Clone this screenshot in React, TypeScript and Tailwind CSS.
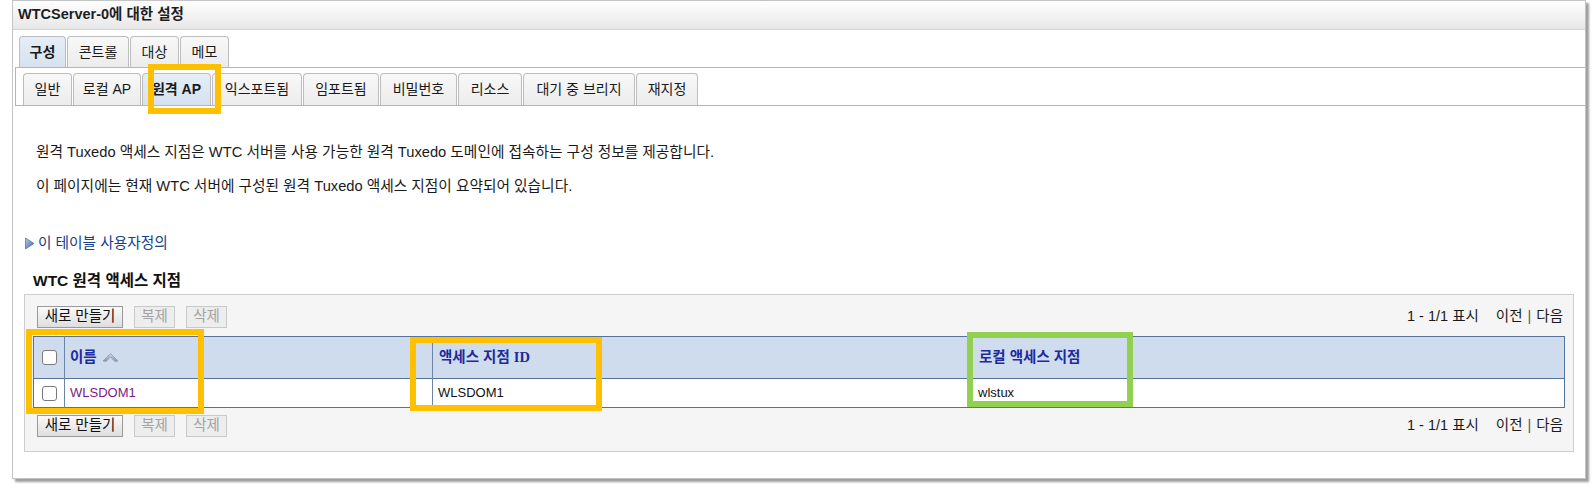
import React from 'react';

const FONT = "font-['Liberation_Sans','Noto_Sans_CJK_KR',sans-serif]";

const topTabs = [
  { label: '구성', w: 'w-[47px]', active: true },
  { label: '콘트롤', w: 'w-[62px]', active: false },
  { label: '대상', w: 'w-[49px]', active: false },
  { label: '메모', w: 'w-[49px]', active: false },
];

const subTabs = [
  { label: '일반', w: 'w-[49px]', active: false },
  { label: '로컬 AP', w: 'w-[68px]', active: false },
  { label: '원격 AP', w: 'w-[69px]', active: true },
  { label: '익스포트됨', w: 'w-[90px]', active: false },
  { label: '임포트됨', w: 'w-[76px]', active: false },
  { label: '비밀번호', w: 'w-[77px]', active: false },
  { label: '리소스', w: 'w-[64px]', active: false },
  { label: '대기 중 브리지', w: 'w-[112px]', active: false },
  { label: '재지정', w: 'w-[62px]', active: false },
];

const Tab = ({ label, w, active, h }: { label: string; w: string; active: boolean; h: string }) => (
  <div
    className={`${w} ${h} flex items-center justify-center rounded-t-[4px] border border-b-0 border-[#bdbdbd] text-[14px] text-[#1a1a1a] ${
      active ? 'bg-gradient-to-b from-[#e6eef7] to-[#d6e2ef] font-bold' : 'bg-gradient-to-b from-[#f8f8f8] to-[#ececec]'
    }`}
  >
    {label}
  </div>
);

const Btn = ({ label, w, disabled }: { label: string; w: string; disabled?: boolean }) => (
  <div
    className={`${w} h-[22px] flex items-center justify-center text-[14.5px] border ${
      disabled
        ? 'border-[#c9c9c9] bg-[#ededed] text-[#a3a3a3]'
        : 'border-[#9a9a9a] bg-gradient-to-b from-[#fafafa] to-[#dedede] text-[#111]'
    }`}
  >
    {label}
  </div>
);

const Toolbar = () => (
  <div className="flex items-center justify-between h-[22px] pl-[12px] pr-[10px]">
    <div className="flex gap-[11px]">
      <Btn label="새로 만들기" w="w-[86px]" />
      <Btn label="복제" w="w-[41px]" disabled />
      <Btn label="삭제" w="w-[41px]" disabled />
    </div>
    <div className="text-[14.5px] text-[#1a1a1a] flex items-center">
      <span>1 - 1/1 표시</span>
      <span className="ml-[17px]">이전</span>
      <span className="mx-[5px] text-[#555]">|</span>
      <span>다음</span>
    </div>
  </div>
);

const Checkbox = () => (
  <div className="w-[15px] h-[15px] rounded-[3px] border border-[#7a7a7a] bg-white mx-auto" />
);

const SortIcon = () => (
  <svg width="17" height="11" viewBox="0 0 17 11" className="ml-[5px]">
    <defs>
      <linearGradient id="sg" x1="0" y1="0" x2="0" y2="1">
        <stop offset="0" stopColor="#d3dcea" />
        <stop offset="1" stopColor="#7f93b2" />
      </linearGradient>
    </defs>
    <path d="M1 9 L8.5 1.5 L16 9 L13 9.5 L8.5 5 L4 9.5 Z" fill="url(#sg)" stroke="#8a9ab2" strokeWidth="0.8" strokeLinejoin="round" />
  </svg>
);

const Box = ({ cls }: { cls: string }) => <div className={`absolute pointer-events-none ${cls}`} />;

export default function App() {
  return (
    <div className={`relative w-[1594px] h-[503px] bg-white pl-[12px] ${FONT}`}>
      <div className="w-[1574px] h-[479px] border border-[#c4c4c4] bg-white shadow-[3px_3px_2px_rgba(0,0,0,0.38)] flex flex-col">
        {/* title bar */}
        <div className="h-[29px] border-b border-[#d4d4d4] bg-gradient-to-b from-white to-[#e7e7e7] pl-[5px] flex items-center text-[14.5px] font-bold text-[#1e1e1e]">
          WTCServer-0에 대한 설정
        </div>

        {/* top tabs */}
        <div className="mt-[6px] pl-[6px] flex gap-[1px]">
          {topTabs.map((t) => (
            <Tab key={t.label} {...t} h="h-[31px]" />
          ))}
        </div>

        {/* sub tabs */}
        <div className="ml-[2px] h-[39px] border-t border-l border-b border-[#a7b8cc] pl-[7px] pt-[5px] flex gap-[1px]">
          {subTabs.map((t) => (
            <Tab key={t.label} {...t} h="h-[32px]" />
          ))}
        </div>

        {/* description */}
        <div className="pl-[23px] text-[14.7px] leading-[16px] text-[#1a1a1a]">
          <p className="mt-[38px]">원격 Tuxedo 액세스 지점은 WTC 서버를 사용 가능한 원격 Tuxedo 도메인에 접속하는 구성 정보를 제공합니다.</p>
          <p className="mt-[18px]">이 페이지에는 현재 WTC 서버에 구성된 원격 Tuxedo 액세스 지점이 요약되어 있습니다.</p>
        </div>

        {/* customize */}
        <div className="mt-[41px] pl-[11px] flex items-center h-[16px] text-[14.7px] text-[#12408a]">
          <svg width="11" height="13" viewBox="0 0 11 13" className="mr-[3px]">
            <defs>
              <linearGradient id="tg" x1="0" y1="0" x2="1" y2="1">
                <stop offset="0" stopColor="#b9cbe6" />
                <stop offset="1" stopColor="#3b63a6" />
              </linearGradient>
            </defs>
            <path d="M1.5 1 L10 6.5 L1.5 12 Z" fill="url(#tg)" stroke="#5a78ad" strokeWidth="0.8" strokeLinejoin="round" />
          </svg>
          이 테이블 사용자정의
        </div>

        {/* table title */}
        <div className="mt-[22px] pl-[20px] h-[16px] leading-[16px] text-[15.5px] font-bold text-[#111]">WTC 원격 액세스 지점</div>

        {/* table panel */}
        <div className="mt-[5px] ml-[11px] w-[1550px] h-[158px] border border-[#cdcdcd] bg-[#f5f5f5] pt-[11px]">
          <Toolbar />
          <div className="mt-[8px] ml-[8px] w-[1532px] bg-white">
            <table className="w-full border-collapse border border-[#54729a] text-[14.5px] table-fixed">
              <colgroup>
                <col className="w-[31px]" />
                <col className="w-[368px]" />
                <col className="w-[540px]" />
                <col />
              </colgroup>
              <thead>
                <tr className="h-[42px] bg-[#cfdcee]">
                  <th className="border-r border-[#6c84a6]">
                    <Checkbox />
                  </th>
                  <th className="border-r border-[#6c84a6] text-left pl-[5px] font-bold text-[#1d2a9e]">
                    <div className="flex items-center">
                      이름
                      <SortIcon />
                    </div>
                  </th>
                  <th className="border-r border-[#6c84a6] text-left pl-[6px] font-bold text-[#1d2a9e]">
                    액세스 지점 <span className="font-['Liberation_Serif',serif]">ID</span>
                  </th>
                  <th className="text-left pl-[6px] font-bold text-[#1d2a9e]">로컬 액세스 지점</th>
                </tr>
              </thead>
              <tbody>
                <tr className="h-[29px] border-t border-[#54729a] text-[13px]">
                  <td className="border-r border-[#6c84a6]">
                    <Checkbox />
                  </td>
                  <td className="border-r border-[#6c84a6] pl-[5px] text-[#7e1a86]">WLSDOM1</td>
                  <td className="border-r border-[#6c84a6] pl-[5px] text-[#111]">WLSDOM1</td>
                  <td className="pl-[5px] text-[#111]">wlstux</td>
                </tr>
              </tbody>
            </table>
          </div>
          <div className="mt-[7px]">
            <Toolbar />
          </div>
        </div>
      </div>

      {/* annotation boxes */}
      <Box cls="left-[148px] top-[64px] w-[73px] h-[50px] border-[6px] border-[#ffc000]" />
      <Box cls="left-[26px] top-[329px] w-[178px] h-[85px] border-[6px] border-[#ffc000]" />
      <Box cls="left-[410px] top-[337px] w-[192px] h-[74px] border-[6px] border-[#ffc000]" />
      <Box cls="left-[967px] top-[332px] w-[166px] h-[75px] border-[6px] border-[#92d050]" />
    </div>
  );
}
